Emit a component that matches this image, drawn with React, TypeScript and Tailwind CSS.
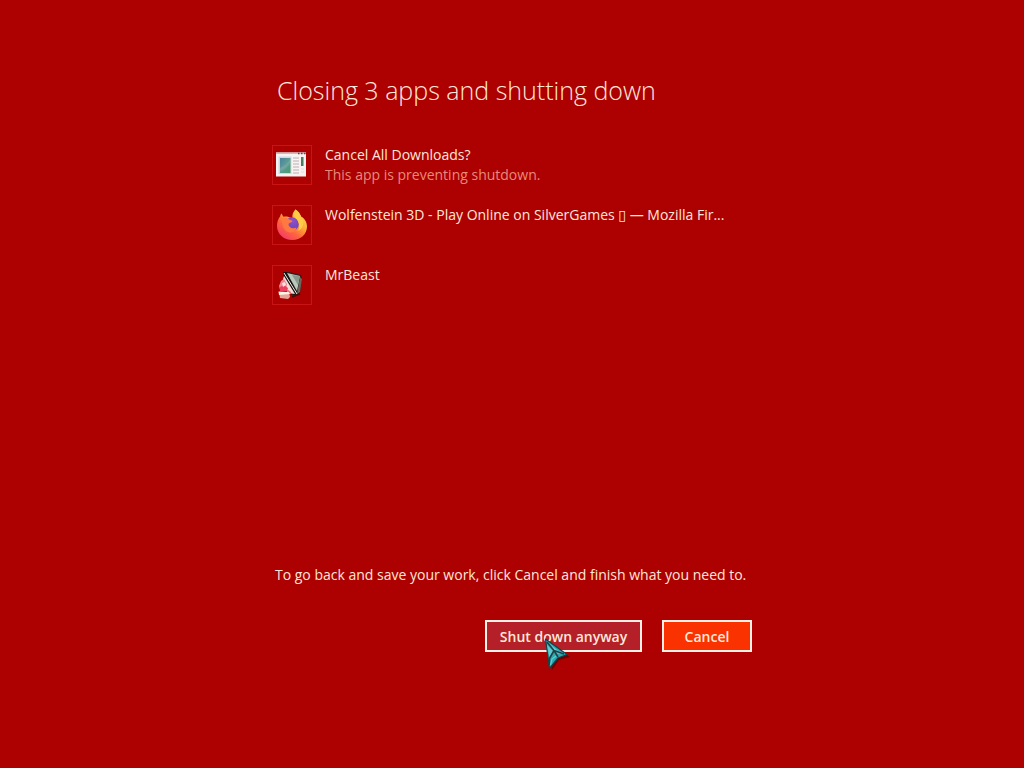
import type { ReactNode } from "react";

function WindowIcon() {
  return (
    <svg viewBox="0 0 32 32" className="size-8" aria-hidden="true">
      <defs>
        <linearGradient id="pane" x1="0" y1="0" x2="1" y2="1">
          <stop offset="0" stopColor="#4d7f9c" />
          <stop offset="0.45" stopColor="#5b9a98" />
          <stop offset="1" stopColor="#4a9a6c" />
        </linearGradient>
      </defs>
      <rect x="0" y="3.5" width="30" height="24" fill="#f6f3f2" />
      <rect x="0" y="3.5" width="30" height="1.5" fill="#cbbcc4" />
      <path d="M22 4.500h1.500M25 4.500h1.500M28 4.500h1.500" stroke="#5a4552" strokeWidth="1.3" />
      <rect x="2.500" y="7.500" width="13" height="17.500" fill="#cfdadd" />
      <rect x="4" y="9" width="10.500" height="15" fill="url(#pane)" />
      <path d="M4 19C8 17 12 14 14.500 9.500V14C12 18 8 21 4 22Z" fill="#9abbb8" opacity="0.35" />
      <path d="M17 9h6M17 12h6M17 15h6M17 18h6M17 21h6M17 24h6" stroke="#bcaeb2" strokeWidth="1" />
      <rect x="25" y="8" width="2.500" height="9" fill="#477d61" />
      <path d="M25 20h3M25 23h3" stroke="#e2dede" />
    </svg>
  );
}

function FirefoxIcon() {
  return (
    <svg viewBox="0 0 32 32" className="size-8" aria-hidden="true">
      <defs>
        <linearGradient id="flame" x1="0.85" y1="0.1" x2="0.2" y2="0.95">
          <stop offset="0" stopColor="#ffd94a" />
          <stop offset="0.35" stopColor="#ffab38" />
          <stop offset="0.65" stopColor="#ff663d" />
          <stop offset="1" stopColor="#f43a68" />
        </linearGradient>
        <radialGradient id="globe" cx="0.55" cy="0.25" r="0.8">
          <stop offset="0" stopColor="#9150c8" />
          <stop offset="1" stopColor="#6442ba" />
        </radialGradient>
      </defs>
      <path
        d="M19.500 0.500C22.300 2.500 24.300 5 25 7.500C28.800 9.500 31 13.500 31 17.400C31 25 24.600 31 16.300 31C7.600 31 1 25 1 17C1 13.200 2.200 9.500 4.200 7.300C4.300 6.400 4.800 5 5.700 4.500C6 5.900 6.700 7 7.600 7.800C9.100 7.200 10.700 7.300 12 7.700L16.500 9.400C15.900 6 17 2.800 19.500 0.500Z"
        fill="url(#flame)"
      />
      <circle cx="16" cy="15" r="6.800" fill="url(#globe)" />
      <path d="M6.500 9.500C9 8.500 12 9 13.500 10.500L16.500 12C16 13.500 13.500 13.500 12.500 15C12.500 18.500 16.500 20.500 20.500 18.500C19.500 23 15 24.500 11.500 22.800C7 20.500 5.500 14 6.500 9.500Z" fill="#ff7940" />
      <path d="M19.500 0.500C17 4 17.500 7.500 20.500 10C23.500 13.500 24 18 22.200 22C28.500 18.500 28.500 12 25 7.500C24.300 5 22.300 2.500 19.500 0.500Z" fill="#ffcb46" />
    </svg>
  );
}

function GameIcon() {
  return (
    <svg viewBox="0 0 32 32" className="size-8" aria-hidden="true">
      <path d="M9 4L13 3L25 6L26 9L24 24L19 27L15 26Z" fill="#24221f" />
      <path d="M7 3L11 3L22 24L18 26L8 9Z" fill="#171311" />
      <path d="M11 4L24 7L21 22Z" fill="#b9c8bb" />
      <path d="M16 6L24 7L22 16Z" fill="#89998e" />
      <path d="M8 7L19 25L12 24L6 14Z" fill="#f7ddd7" />
      <path d="M8 4L21 25" stroke="#f6efea" strokeWidth="1" />
      <path d="M24 8L26 10L24 23L21 25Z" fill="#70645a" />
      <path d="M5 12L8 10L11 15L10 21L4 21L3 17Z" fill="#ee8793" />
      <path d="M4 18L8 16L12 19L11 22L4 22Z" fill="#ea405e" />
      <path d="M6 14L9 13L10 16L7 18Z" fill="#ffe0de" />
      <path d="M11 20L15 23L15 25L11 25Z" fill="#ec6e78" />
      <path d="M3 23L13 23L14 28L12 30L4 29Z" fill="#e5a69a" />
      <path d="M2.500 22.500L12.500 23L14 25L3 26Z" fill="#fff3e2" />
      <path d="M16 28L24 25" stroke="#560604" strokeWidth="1.500" />
    </svg>
  );
}

function Cursor() {
  return (
    <svg viewBox="0 0 26 32" className="pointer-events-none absolute left-[59px] top-[18px] h-8 w-[26px]" aria-hidden="true">
      <path d="M3 4L26 19L15 22L8 32Z" fill="#350000" opacity="0.5" />
      <path d="M1.500 1L23 16.500L14 20L5.500 30.500Z" fill="#2ba9ae" stroke="#174047" strokeWidth="1.2" strokeLinejoin="round" />
      <path d="M2.500 3L13 12L21 16L12.500 15.500Z" fill="#5dd5d6" />
      <path d="M3 7L9 13L5.500 19Z" fill="#63cbd0" />
      <path d="M3 4L10 12.500L5.500 20.500V27M10 12.500L14 19M10 12.500L20 16" fill="none" stroke="#243f48" strokeWidth="1.6" />
      <path d="M6.500 27L8 21L12 18" fill="none" stroke="#58d4d4" strokeWidth="1.2" />
    </svg>
  );
}

const apps: { name: string; status?: string; icon: ReactNode }[] = [
  { name: "Cancel All Downloads?", status: "This app is preventing shutdown.", icon: <WindowIcon /> },
  { name: "Wolfenstein 3D - Play Online on SilverGames ▯ — Mozilla Fir...", icon: <FirefoxIcon /> },
  { name: "MrBeast", icon: <GameIcon /> },
];

export default function App() {
  return (
    <main className="flex min-h-screen justify-center bg-[#ad0000] font-['Open_Sans','Noto_Sans','DejaVu_Sans',sans-serif] text-sm text-[#ffe8da]">
      <div className="flex w-full max-w-[480px] flex-col pt-[72px]">
        <h1 className="pl-[5px] text-[25px] leading-9 font-light">Closing 3 apps and shutting down</h1>
        <ul className="mt-[37px] flex min-h-[420px] flex-col gap-5">
          {apps.map((app) => (
            <li key={app.name} className="flex h-10 gap-[13px]">
              <div className="flex size-10 shrink-0 items-center justify-center border border-[#c71414]">{app.icon}</div>
              <div className="min-w-0 leading-5 whitespace-nowrap">
                <p>{app.name}</p>
                {app.status && <p className="text-[#e88b7c]">{app.status}</p>}
              </div>
            </li>
          ))}
        </ul>
        <p className="pl-[3px] leading-5 whitespace-nowrap">To go back and save your work, click Cancel and finish what you need to.</p>
        <div className="mt-[35px] flex justify-end gap-5 font-semibold">
          <div className="relative">
            <button type="button" className="h-8 w-[157px] border-2 border-[#fff0e8] bg-[#b51f28] pt-0.5 whitespace-nowrap">Shut down anyway</button>
            <Cursor />
          </div>
          <button type="button" className="h-8 w-[90px] border-2 border-[#fff0e8] bg-[#fa3200] pt-0.5">Cancel</button>
        </div>
      </div>
    </main>
  );
}
